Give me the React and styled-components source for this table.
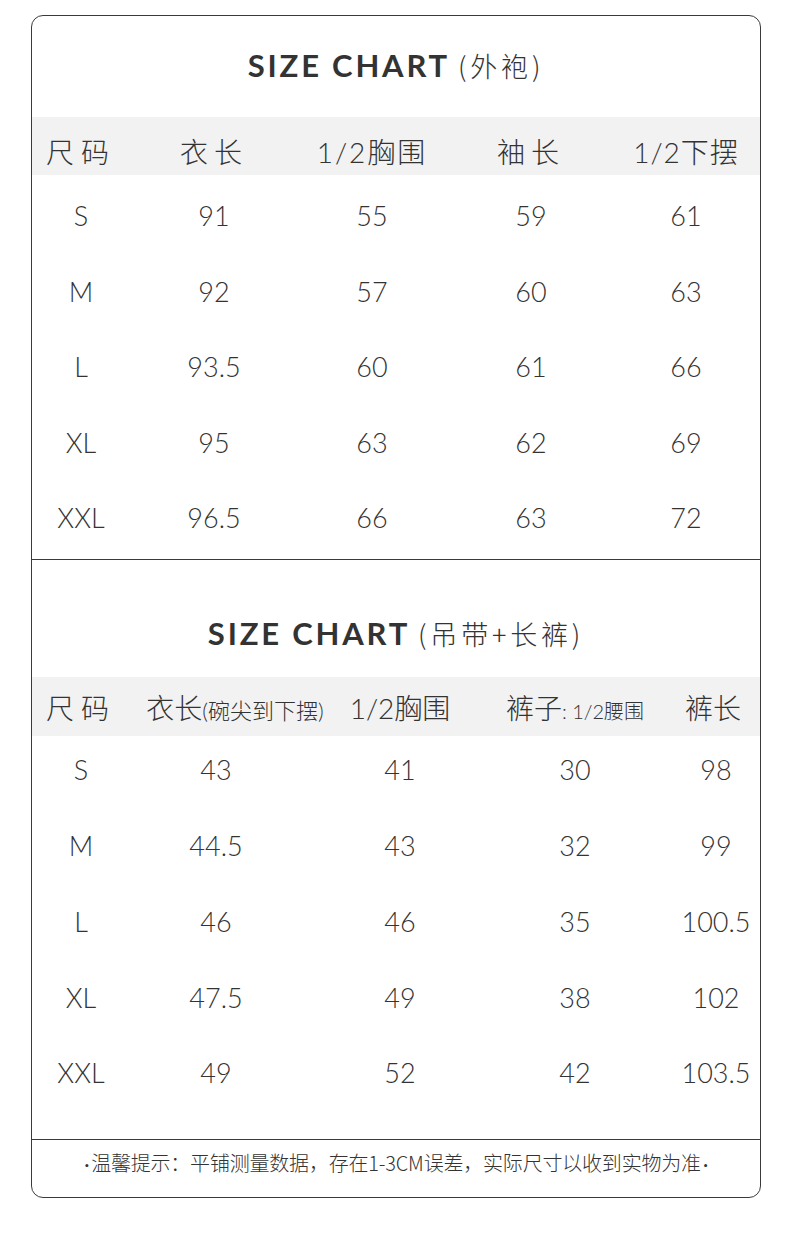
import React from "react";
import styled, { createGlobalStyle } from "styled-components";

const Global = createGlobalStyle`
  html, body { margin: 0; padding: 0; background: #fff; }
  body { font-family: "Lato", "Noto Sans CJK SC", sans-serif; color: #333; }
`;

const Page = styled.div`
  width: 790px;
  min-height: 1251px;
  padding: 15px 0 0 31px;
  box-sizing: border-box;
`;

const Card = styled.div`
  width: 730px;
  box-sizing: border-box;
  border: 1px solid #3a3a3a;
  border-radius: 12px;
  overflow: hidden;
  display: flex;
  flex-direction: column;
`;

const Section = styled.section`
  display: flex;
  flex-direction: column;
  border-bottom: 1px solid #3a3a3a;
`;

const Title = styled.h2`
  margin: 0;
  padding: ${(p) => p.$top}px 0 ${(p) => p.$bottom}px;
  display: flex;
  justify-content: center;
  align-items: baseline;
  line-height: 36px;
  color: #333;
`;

const TitleMain = styled.span`
  font-family: "Lato", sans-serif;
  font-weight: 700;
  font-size: 31px;
  letter-spacing: 2.8px;
`;

const TitleSub = styled.span`
  font-family: "Noto Sans CJK SC", sans-serif;
  font-weight: 300;
  font-size: 27px;
  margin-left: 8px;
  letter-spacing: 3.8px;
`;

const Grid = styled.div`
  display: grid;
  grid-template-columns: ${(p) => p.$cols};
  align-items: center;
`;

const HeaderRow = styled(Grid)`
  height: ${(p) => p.$h}px;
  box-sizing: border-box;
  padding-top: ${(p) => p.$pt}px;
  background: #f2f2f2;
`;

const HeadCell = styled.div`
  display: flex;
  justify-content: center;
  align-items: baseline;
  padding-left: ${(p) => p.$pl || 0}px;
  font-family: "Lato", "Noto Sans CJK SC", sans-serif;
  font-weight: 300;
  font-size: 28px;
  letter-spacing: ${(p) => p.$ls}px;
  white-space: nowrap;
  color: #333;
`;

const Small = styled.span`
  font-size: ${(p) => p.$size}px;
  letter-spacing: 0;
`;

const Rows = styled.div`
  display: flex;
  flex-direction: column;
  padding: ${(p) => p.$top}px 0 ${(p) => p.$bottom}px;
`;

const DataRow = styled(Grid)`
  height: ${(p) => p.$h}px;
  box-sizing: border-box;
  padding-bottom: ${(p) => p.$lift * 2}px;
`;

const Cell = styled.div`
  text-align: center;
  padding-left: ${(p) => p.$pl || 0}px;
  font-family: "Lato", sans-serif;
  font-weight: 300;
  font-size: 27px;
  color: #333;
`;

const Note = styled.p`
  margin: 0;
  padding: 10px 0 21px;
  text-align: center;
  font-family: "Noto Sans CJK SC", sans-serif;
  font-weight: 300;
  font-size: 20px;
  line-height: 26px;
  color: #333;
  letter-spacing: -0.2px;
`;

const Dot = styled.span`
  font-family: "Lato", sans-serif;
  font-weight: 400;
  margin: 0 2px;
`;

const table1 = {
  cols: "98px 168px 148px 170px 140px",
  pads: [0, 0, 0, 0, 0],
  head: ["尺码", "衣长", "1/2胸围", "袖长", "1/2下摆"],
  rows: [
    ["S", "91", "55", "59", "61"],
    ["M", "92", "57", "60", "63"],
    ["L", "93.5", "60", "61", "66"],
    ["XL", "95", "63", "62", "69"],
    ["XXL", "96.5", "66", "63", "72"],
  ],
};

const table2 = {
  cols: "98px 172px 196px 154px 108px",
  pads: [0, 0, 0, 0, 20],
  head: [
    <>尺码</>,
    <>
      衣长<Small $size={22}>(碗尖到下摆)</Small>
    </>,
    <>1/2胸围</>,
    <>
      裤子<Small $size={20}>: 1/2腰围</Small>
    </>,
    <>裤长</>,
  ],
  headPads: [0, 38, 0, 0, 14],
  rows: [
    ["S", "43", "41", "30", "98"],
    ["M", "44.5", "43", "32", "99"],
    ["L", "46", "46", "35", "100.5"],
    ["XL", "47.5", "49", "38", "102"],
    ["XXL", "49", "52", "42", "103.5"],
  ],
};

function SizeTable({ title, sub, t, titlePad, headH, headPt, ls, rowsPad, rowH, lift }) {
  return (
    <Section>
      <Title $top={titlePad[0]} $bottom={titlePad[1]}>
        <TitleMain>{title}</TitleMain>
        <TitleSub>{sub}</TitleSub>
      </Title>
      <HeaderRow $cols={t.cols} $h={headH} $pt={headPt}>
        {t.head.map((h, i) => (
          <HeadCell key={i} $ls={ls[i]} $pl={t.headPads ? t.headPads[i] : 0}>
            {h}
          </HeadCell>
        ))}
      </HeaderRow>
      <Rows $top={rowsPad[0]} $bottom={rowsPad[1]}>
        {t.rows.map((r, ri) => (
          <DataRow key={ri} $cols={t.cols} $lift={lift} $h={rowH}>
            {r.map((c, ci) => (
              <Cell key={ci} $pl={t.pads[ci]}>
                {c}
              </Cell>
            ))}
          </DataRow>
        ))}
      </Rows>
    </Section>
  );
}

export default function App() {
  return (
    <>
      <Global />
      <Page>
        <Card>
          <SizeTable
            title="SIZE CHART"
            sub="(外袍)"
            t={table1}
            titlePad={[31, 33]}
            headH={58}
            headPt={9}
            ls={[7, 6, 2, 6, 1]}
            rowsPad={[3, 3.5]}
            rowH={75.5}
            lift={0}
          />
          <SizeTable
            title="SIZE CHART"
            sub="(吊带+长裤)"
            t={table2}
            titlePad={[55, 25]}
            headH={59}
            headPt={0}
            ls={[7, 0, 0, 0, 0]}
            rowsPad={[0, 24]}
            rowH={75.75}
            lift={4}
          />
          <Note>
            <Dot>·</Dot>温馨提示：平铺测量数据，存在1-3CM误差，实际尺寸以收到实物为准<Dot>·</Dot>
          </Note>
        </Card>
      </Page>
    </>
  );
}
